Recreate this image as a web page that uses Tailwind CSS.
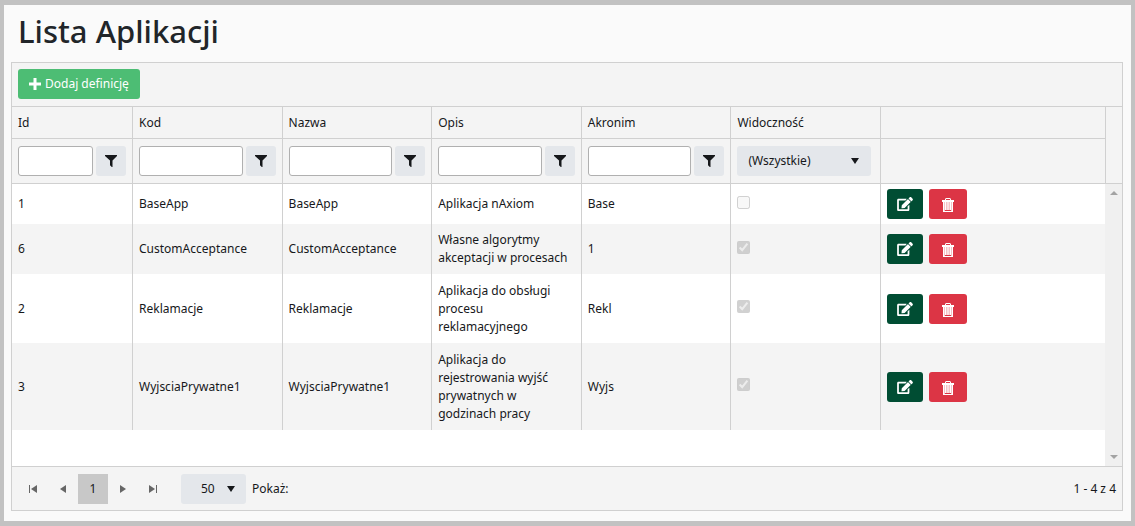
<!DOCTYPE html>
<html lang="pl">
<head>
  <meta charset="UTF-8">
  <meta name="viewport" content="width=device-width, initial-scale=1">
  <title>Lista Aplikacji</title>
  <script src="https://cdn.jsdelivr.net/npm/@tailwindcss/browser@4"></script>
</head>
<body class="min-h-screen flex flex-col bg-[#fafafa] border-x-4 border-y-5 border-[#c2c2c2] pl-[7px] pr-2 pb-2.5 font-['Noto_Sans','Open_Sans',sans-serif] text-xs leading-[18px] text-[#16181b]">

  <!-- Icons -->
  <svg class="hidden">
    <symbol id="plus" viewBox="0 0 12 12"><path d="M4.5 0h3v4.5H12v3H7.5V12h-3V7.5H0v-3h4.5z"/></symbol>
    <symbol id="filter" viewBox="0 0 12 12"><path d="M0 0h12v1L7.500 5.500V12h-.7L5 10.200V5.500L0 1z"/></symbol>
    <symbol id="down" viewBox="0 0 8 6"><path d="M0 0h8L4 6z"/></symbol>
    <symbol id="edit" viewBox="0 0 576 512"><path d="M402.600 83.200l90.200 90.200c3.800 3.800 3.800 10 0 13.800L274.400 405.600l-92.800 10.300c-12.400 1.400-22.900-9.100-21.500-21.500l10.300-92.800L388.800 83.200c3.800-3.800 10-3.800 13.800 0zm162-22.900l-48.800-48.800c-15.200-15.200-39.900-15.200-55.200 0l-35.400 35.400c-3.800 3.800-3.800 10 0 13.800l90.200 90.200c3.800 3.800 10 3.800 13.800 0l35.400-35.400c15.200-15.300 15.200-40 0-55.200zM384 346.200V448H64V128h229.800c3.200 0 6.200-1.300 8.500-3.500l40-40c7.600-7.600 2.200-20.500-8.500-20.500H48C21.500 64 0 85.500 0 112v352c0 26.500 21.500 48 48 48h352c26.500 0 48-21.500 48-48V306.200c0-10.700-12.900-16-20.500-8.500l-40 40c-2.200 2.300-3.500 5.300-3.500 8.500z"/></symbol>
    <symbol id="trash" viewBox="0 0 12 14"><path fill-rule="evenodd" d="M4 0h4l1 1v1h3v2H0V2h3V1zM4 1v1h4V1z"/><path d="M1 4h10v10H1z" opacity=".7"/><path d="M1 4h1v10H1zm2 0h1v9H3zm2.500 0h1v9h-1zM8 4h1v9H8zm2 0h1v10h-1zM1 13h10v1H1z"/><path d="M3 12h6v1H3z" fill="#dc3545"/></symbol>
    <symbol id="first" viewBox="0 0 8 8"><path d="M0 0h1v8H0zM8 0v8L2 4z"/></symbol>
    <symbol id="prev" viewBox="0 0 6 8"><path d="M6 0v8L0 4z"/></symbol>
    <symbol id="next" viewBox="0 0 6 8"><path d="M0 0v8l6-4z"/></symbol>
    <symbol id="last" viewBox="0 0 8 8"><path d="M7 0h1v8H7zM0 0v8l6-4z"/></symbol>
  </svg>

  <h1 class="pl-[7px] pt-1 mb-[9px] text-[31px] leading-[44px] font-medium text-[#212529]">Lista Aplikacji</h1>

  <main class="flex-1 flex flex-col bg-white border border-[#d0d0d0]">
    <!-- Toolbar -->
    <div class="px-1.5 pt-1.5 pb-[7px] bg-[#f4f4f4] border-b border-[#d0d0d0]">
      <button type="button" class="h-[30px] px-[11px] flex items-center gap-1 rounded-[3px] bg-[#4dbd74] text-white">
        <svg class="size-3 fill-current"><use href="#plus"/></svg>Dodaj definicję
      </button>
    </div>

    <!-- Header -->
    <div class="flex bg-[#f4f4f4] border-b border-[#d0d0d0]">
      <table class="flex-1 w-full table-fixed border-separate border-spacing-0">
        <colgroup><col class="w-[121px]"><col><col><col><col><col><col class="w-[224px]"></colgroup>
        <thead>
          <tr class="h-8 text-left *:font-normal *:px-1.5 *:border-r *:border-b *:border-[#d0d0d0] *:last:border-r-0">
            <th>Id</th><th>Kod</th><th>Nazwa</th><th>Opis</th><th>Akronim</th><th>Widoczność</th><th></th>
          </tr>
          <tr class="h-11 *:px-1.5 *:border-r *:border-[#d0d0d0] *:last:border-r-0">
            <td>
              <div class="flex gap-[3px]">
                <input type="text" aria-label="Id" class="flex-1 min-w-0 h-[30px] px-2 bg-white border border-[#b0b0b0] rounded-[3px]">
                <button type="button" aria-label="Filtr Id" class="size-[30px] flex items-center justify-center rounded-[3px] bg-[#e4e7eb]"><svg class="size-3 fill-current"><use href="#filter"/></svg></button>
              </div>
            </td>
            <td>
              <div class="flex gap-[3px]">
                <input type="text" aria-label="Kod" class="flex-1 min-w-0 h-[30px] px-2 bg-white border border-[#b0b0b0] rounded-[3px]">
                <button type="button" aria-label="Filtr Kod" class="size-[30px] flex items-center justify-center rounded-[3px] bg-[#e4e7eb]"><svg class="size-3 fill-current"><use href="#filter"/></svg></button>
              </div>
            </td>
            <td>
              <div class="flex gap-[3px]">
                <input type="text" aria-label="Nazwa" class="flex-1 min-w-0 h-[30px] px-2 bg-white border border-[#b0b0b0] rounded-[3px]">
                <button type="button" aria-label="Filtr Nazwa" class="size-[30px] flex items-center justify-center rounded-[3px] bg-[#e4e7eb]"><svg class="size-3 fill-current"><use href="#filter"/></svg></button>
              </div>
            </td>
            <td>
              <div class="flex gap-[3px]">
                <input type="text" aria-label="Opis" class="flex-1 min-w-0 h-[30px] px-2 bg-white border border-[#b0b0b0] rounded-[3px]">
                <button type="button" aria-label="Filtr Opis" class="size-[30px] flex items-center justify-center rounded-[3px] bg-[#e4e7eb]"><svg class="size-3 fill-current"><use href="#filter"/></svg></button>
              </div>
            </td>
            <td>
              <div class="flex gap-[3px]">
                <input type="text" aria-label="Akronim" class="flex-1 min-w-0 h-[30px] px-2 bg-white border border-[#b0b0b0] rounded-[3px]">
                <button type="button" aria-label="Filtr Akronim" class="size-[30px] flex items-center justify-center rounded-[3px] bg-[#e4e7eb]"><svg class="size-3 fill-current"><use href="#filter"/></svg></button>
              </div>
            </td>
            <td>
              <div class="relative mr-[3px]">
                <select aria-label="Widoczność" class="w-full h-[30px] pl-[11px] appearance-none rounded-[3px] bg-[#e4e7eb]">
                  <option>(Wszystkie)</option>
                  <option>Tak</option>
                  <option>Nie</option>
                </select>
                <svg class="absolute right-3 top-3 w-2 h-1.5 fill-current pointer-events-none"><use href="#down"/></svg>
              </div>
            </td>
            <td></td>
          </tr>
        </thead>
      </table>
      <div class="w-[17px] border-l border-[#d0d0d0]"></div>
    </div>

    <!-- Rows -->
    <div class="flex-1 flex">
      <div class="flex-1">
        <table class="w-full table-fixed border-separate border-spacing-0">
          <colgroup><col class="w-[121px]"><col><col><col><col><col><col class="w-[224px]"></colgroup>
          <tbody id="rows"></tbody>
        </table>
      </div>
      <div class="w-[17px] py-[7px] flex flex-col items-center justify-between bg-[#f0f0f0] text-[#a3a3a3]">
        <svg class="w-2 h-1 fill-current" viewBox="0 0 8 4"><path d="M4 0l4 4H0z"/></svg>
        <svg class="w-2 h-1 fill-current" viewBox="0 0 8 4"><path d="M0 0h8L4 4z"/></svg>
      </div>
    </div>

    <!-- Pager -->
    <div class="h-11 px-1.5 flex items-center bg-[#f4f4f4] border-t border-[#d0d0d0]">
      <button type="button" aria-label="Pierwsza" class="size-[30px] flex items-center justify-center text-[#666]"><svg class="size-2 fill-current"><use href="#first"/></svg></button>
      <button type="button" aria-label="Poprzednia" class="size-[30px] flex items-center justify-center text-[#666]"><svg class="w-1.5 h-2 fill-current"><use href="#prev"/></svg></button>
      <button type="button" class="size-[30px] bg-[#c8c8c8]">1</button>
      <button type="button" aria-label="Następna" class="size-[30px] flex items-center justify-center text-[#666]"><svg class="w-1.5 h-2 fill-current"><use href="#next"/></svg></button>
      <button type="button" aria-label="Ostatnia" class="size-[30px] flex items-center justify-center text-[#666]"><svg class="size-2 fill-current"><use href="#last"/></svg></button>
      <div class="relative ml-[13px] mr-1.5">
        <select id="pageSize" class="w-[65px] h-[30px] pl-5 appearance-none rounded-[3px] bg-[#e4e7eb]">
          <option>50</option>
          <option>100</option>
        </select>
        <svg class="absolute right-[11px] top-3 w-2 h-1.5 fill-current pointer-events-none"><use href="#down"/></svg>
      </div>
      <label for="pageSize">Pokaż:</label>
      <span class="ml-auto">1 - 4 z 4</span>
    </div>
  </main>

  <script>
    const apps = [
      { id: 1, code: 'BaseApp', name: 'BaseApp', desc: 'Aplikacja nAxiom', acronym: 'Base', visible: false, height: 'h-10' },
      { id: 6, code: 'CustomAcceptance', name: 'CustomAcceptance', desc: 'Własne algorytmy akceptacji w procesach', acronym: '1', visible: true, height: 'h-[50px]' },
      { id: 2, code: 'Reklamacje', name: 'Reklamacje', desc: 'Aplikacja do obsługi procesu reklamacyjnego', acronym: 'Rekl', visible: true, height: 'h-[69px]' },
      { id: 3, code: 'WyjsciaPrywatne1', name: 'WyjsciaPrywatne1', desc: 'Aplikacja do rejestrowania wyjść prywatnych w godzinach pracy', acronym: 'Wyjs', visible: true, height: 'h-[87px]' }
    ];

    document.getElementById('rows').innerHTML = apps.map(app => `
      <tr class="${app.height} even:bg-[#f4f4f4] *:px-1.5 *:border-r *:border-[#d0d0d0] *:last:border-r-0">
        <td>${app.id}</td>
        <td>${app.code}</td>
        <td>${app.name}</td>
        <td>${app.desc}</td>
        <td>${app.acronym}</td>
        <td><input type="checkbox" aria-label="Widoczność ${app.name}" disabled ${app.visible ? 'checked' : ''} class="block size-[13px] mb-1"></td>
        <td>
          <div class="flex gap-1.5">
            <button type="button" aria-label="Edytuj" class="w-9 h-[30px] flex items-center justify-center rounded-[3px] bg-[#004d33] text-white"><svg class="w-4 h-3.5 fill-current"><use href="#edit"/></svg></button>
            <button type="button" aria-label="Usuń" class="w-[38px] h-[30px] pt-0.5 flex items-center justify-center rounded-[3px] bg-[#dc3545] text-white"><svg class="w-3 h-3.5 fill-current"><use href="#trash"/></svg></button>
          </div>
        </td>
      </tr>`).join('');
  </script>
</body>
</html>
